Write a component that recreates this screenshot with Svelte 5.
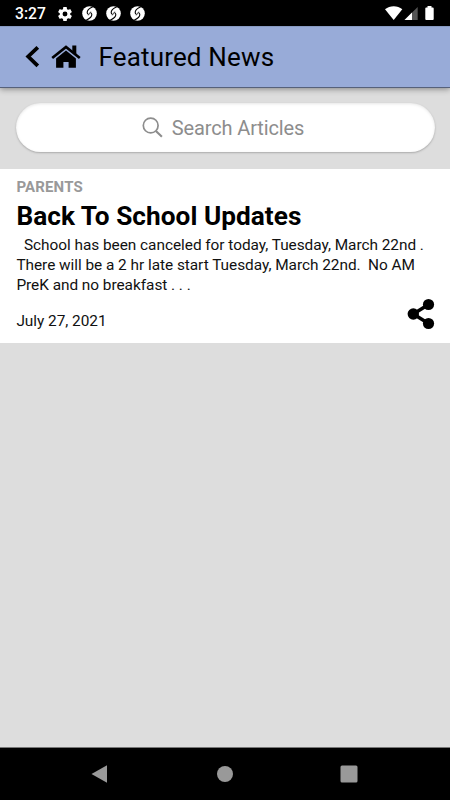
<script>
  const lines = [
    '  School has been canceled for today, Tuesday, March 22nd .',
    'There will be a 2 hr late start Tuesday, March 22nd.  No AM',
    'PreK and no breakfast . . .'
  ];
</script>

<div class="screen">
  <div class="status">
    <span class="time">3:27</span>
    <svg class="gear" width="14" height="14" viewBox="2 2 20 20"><path fill="#fff" d="M19.43 12.98c.04-.32.07-.64.07-.98s-.03-.66-.07-.98l2.11-1.65c.19-.15.24-.42.12-.64l-2-3.46c-.12-.22-.39-.3-.61-.22l-2.49 1c-.52-.4-1.08-.73-1.69-.98l-.38-2.65A.49.49 0 0 0 14 2h-4c-.25 0-.46.18-.49.42l-.38 2.65c-.61.25-1.17.59-1.69.98l-2.49-1c-.23-.09-.49 0-.61.22l-2 3.46c-.13.22-.07.49.12.64l2.11 1.65c-.04.32-.07.65-.07.98s.03.66.07.98l-2.11 1.65c-.19.15-.24.42-.12.64l2 3.46c.12.22.39.3.61.22l2.49-1c.52.4 1.08.73 1.69.98l.38 2.65c.03.24.24.42.49.42h4c.25 0 .46-.18.49-.42l.38-2.65c.61-.25 1.17-.59 1.69-.98l2.49 1c.23.09.49 0 .61-.22l2-3.46c.12-.22.07-.49-.12-.64zM12 15.5a3.5 3.5 0 1 1 0-7 3.5 3.5 0 0 1 0 7z" /></svg>
    {#each [0, 1, 2] as n (n)}
      <svg class="badge" width="15" height="15" viewBox="0 0 15 15">
        <circle cx="7.5" cy="7.5" r="7.3" fill="#fff" />
        <path d="M10.800.8C7.500 2.300 5 4.600 5.200 6.700c.1 1 .8 1.300 1.300 1.800M4.200 14.200C7.500 12.700 10 10.400 9.800 8.300c-.1-1-.8-1.300-1.300-1.800" fill="none" stroke="#000" stroke-width="1.100" />
        <path d="M8.700 5.600L6.300 9.400" fill="none" stroke="#000" stroke-width=".6" />
      </svg>
    {/each}
    <svg class="signals" width="50" height="16" viewBox="0 0 50 16">
      <path d="M0 3.300C5-.9 12.500-.9 17.300 3.300L8.700 14z" fill="#fff" />
      <path d="M19.500 14L32.700 1v13z" fill="#555" />
      <path d="M19.500 14L27 6.600V14z" fill="#fff" />
      <path d="M42.500 0h4v1.500h1.300q.9 0 .9.900v10.700q0 .9-.9.900h-6.600q-.9 0-.9-.9V2.400q0-.9.900-.9h1.300z" fill="#fff" />
    </svg>
  </div>

  <header>
    <svg class="back" width="15" height="24" viewBox="0 0 15 24"><path d="M12.800 2.300L3.200 11.500l9.600 9.400" fill="none" stroke="#000" stroke-width="3.800" /></svg>
    <svg class="home" width="30" height="24" viewBox="0 0 30 24">
      <path d="M1.200 13L15 1.900 28.800 13" fill="none" stroke="#000" stroke-width="2.700" />
      <path d="M21.300 .5h4v9.100l-4-3.300z" />
      <path d="M15 5.400l9.900 8v9.400h-7.300v-5.700h-5.200v5.700H5.100v-9.400z" />
    </svg>
    <h1>Featured News</h1>
  </header>

  <main>
    <div class="search">
      <svg width="22" height="22" viewBox="0 0 22 22" fill="none" stroke="#8d8d8d"><circle cx="8.700" cy="8.500" r="7.400" stroke-width="1.700" /><path d="M13.900 13.900l6 5.900" stroke-width="2.100" /></svg>
      <span>Search Articles</span>
    </div>
    <article>
      <div class="category">PARENTS</div>
      <h2>Back To School Updates</h2>
      <div class="summary">
        {#each lines as line, i (i)}<div>{line}</div>{/each}
      </div>
      <footer>
        <time datetime="2021-07-27">July 27, 2021</time>
        <svg width="28" height="32" viewBox="0 0 28 32"><path d="M21.500 6.500L6.300 16l15.200 9.500" fill="none" stroke="#000" stroke-width="3.500" /><circle cx="21.500" cy="6.500" r="5.600" /><circle cx="6.300" cy="16" r="5.700" /><circle cx="21.500" cy="25.500" r="5.600" /></svg>
      </footer>
    </article>
  </main>

  <nav>
    <svg width="18" height="18" viewBox="0 0 18 18"><path d="M.5 9L16 .2v17.600z" /></svg>
    <svg width="18" height="18" viewBox="0 0 18 18"><circle cx="9" cy="9" r="8" /></svg>
    <svg width="18" height="18" viewBox="0 0 18 18"><rect x=".5" y=".5" width="17" height="17" rx="1.500" /></svg>
  </nav>
</div>

<style>
  :global(body) { margin: 0; }
  .screen { width: 450px; height: 800px; display: flex; flex-direction: column; background: #ddd; font-family: Roboto, "Liberation Sans", sans-serif; color: #000; overflow: hidden; }
  .status { height: 26px; flex: none; background: #000; color: #fff; display: flex; align-items: center; box-sizing: border-box; padding: 1px 15px 0 15px; }
  .time { width: 43px; font-size: 15.700px; line-height: 26px; font-weight: 500; }
  .gear { margin-right: 10px; }
  .badge { margin-right: 9px; }
  .signals { margin-left: auto; margin-right: 0; }
  header { height: 62px; flex: none; box-sizing: border-box; padding-left: 25px; display: flex; align-items: center; background: #98abd8; border-top: 1px solid #889ac2; border-bottom: 1px solid #56617a; box-shadow: 0 1px 6px rgba(0, 0, 0, .42); }
  .home { margin-left: 11px; }
  h1 { margin: 0 0 0 17.500px; font-size: 26px; line-height: 32px; font-weight: 400; letter-spacing: .16px; white-space: nowrap; }
  main { flex: 1; padding-top: 15px; }
  .search { height: 49px; margin: 0 15px 17px 16px; border-radius: 25px; background: #fff; box-shadow: 0 1px 2px #aaa, inset 0 1px 3px rgba(0, 0, 0, .1); display: flex; align-items: center; justify-content: center; gap: 8px; padding-right: 5px; box-sizing: border-box; color: #8d8d8d; font-size: 20px; letter-spacing: -.12px; }
  article { height: 174px; box-sizing: border-box; background: #fff; padding: 8px 15px 0 16.400px; }
  .category { font-size: 15px; line-height: 20px; font-weight: 700; color: #999; letter-spacing: .16px; }
  h2 { margin: 3px 0 0; font-size: 26.200px; line-height: 32px; font-weight: 700; letter-spacing: .04px; white-space: nowrap; }
  .summary { margin-top: 3px; font-size: 15.400px; line-height: 20px; white-space: pre; letter-spacing: -.035px; }
  .summary, time { color: #111; }
  footer { display: flex; justify-content: space-between; align-items: flex-start; margin-top: 3px; }
  time { font-size: 15.400px; line-height: 20px; padding-top: 13px; letter-spacing: -.035px; }
  nav { height: 53px; flex: none; box-sizing: border-box; border-top: 1px solid #777; background: #000; display: flex; justify-content: space-between; align-items: center; padding: 0 92px 0 91px; fill: #999; }
</style>
